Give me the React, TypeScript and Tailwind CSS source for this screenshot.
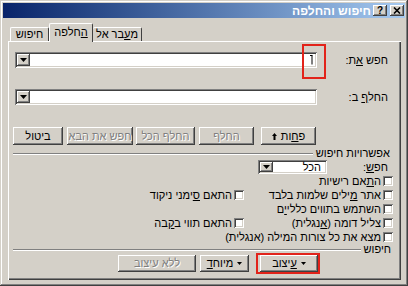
/*
 * Find & Replace dialog (Hebrew, classic Windows look)
 */

import type { ReactNode } from 'react';

const raised =
  'shadow-[inset_-1px_-1px_#404040,inset_1px_1px_#ffffff,inset_-2px_-2px_#808080]';
const sunken =
  'shadow-[inset_1px_1px_#808080,inset_-1px_-1px_#ffffff,inset_2px_2px_#404040,inset_-2px_-2px_#d4d0c8]';
const grayed = 'text-[#808080] [text-shadow:1px_1px_0_#ffffff]';

function DropArrow() {
  return (
    <div className={`w-[13px] h-full bg-[#d4d0c8] flex items-center justify-center shrink-0 ${raised}`}>
      <svg width="7" height="4" viewBox="0 0 7 4">
        <path d="M0 0h7L3.5 4z" fill="#000" />
      </svg>
    </div>
  );
}

function SmallArrow({ dim }: { dim?: boolean }) {
  return (
    <svg width="5" height="3" viewBox="0 0 5 3" className="shrink-0">
      <path d="M0 0h5L2.5 3z" fill={dim ? '#808080' : '#000'} />
    </svg>
  );
}

function Btn({
  w,
  mr,
  h = 'h-[18px]',
  disabled,
  children,
}: {
  w: string;
  mr?: string;
  h?: string;
  disabled?: boolean;
  children: ReactNode;
}) {
  return (
    <div
      className={`${w} ${h} ${mr ?? ''} shrink-0 flex items-center justify-center gap-[4px] bg-[#d4d0c8] ${raised} ${
        disabled ? grayed : 'text-black'
      }`}
    >
      {children}
    </div>
  );
}

function Check({ label, w }: { label: ReactNode; w?: string }) {
  return (
    <div className={`flex items-center gap-[2px] ${w ?? ''}`}>
      <div className={`w-[10px] h-[10px] bg-white shrink-0 ${sunken}`} />
      <span className="leading-none whitespace-nowrap">{label}</span>
    </div>
  );
}

function Separator({ label, pr }: { label: string; pr: string }) {
  return (
    <div className={`flex items-center h-[11px] ${pr}`}>
      <span className="leading-none whitespace-nowrap pl-[3px]">{label}</span>
      <div className="flex-1 ml-[5px] h-[2px] border-t border-t-[#808080] border-b border-b-white" />
    </div>
  );
}

export default function App() {
  return (
    <div
      className="w-[408px] h-[286px] bg-[#d4d0c8] overflow-hidden flex flex-col text-[11px] text-black shadow-[inset_-1px_-1px_#404040,inset_1px_1px_#d4d0c8,inset_-2px_-2px_#808080,inset_2px_2px_#ffffff]"
      style={{ fontFamily: '"Liberation Sans", "DejaVu Sans", sans-serif' }}
    >
      {/* Title bar */}
      <div
        dir="rtl"
        className="mt-[3px] mx-[3px] h-[15px] shrink-0 flex items-center bg-gradient-to-l from-[#a6caf0] to-[#0a246a] pr-[1px]"
      >
        <div className={`w-[14px] h-[11px] bg-[#d4d0c8] flex items-center justify-center ${raised}`}>
          <svg width="8" height="7" viewBox="0 0 8 7">
            <path d="M1 0.5l6 6M7 0.5l-6 6" stroke="#000" strokeWidth="1.6" />
          </svg>
        </div>
        <div
          className={`w-[14px] h-[11px] mr-[3px] bg-[#d4d0c8] flex items-center justify-center text-[10px] font-bold leading-none ${raised}`}
        >
          ?
        </div>
        <span className="mr-[2px] text-white font-bold text-[12px] leading-none">חיפוש והחלפה</span>
      </div>

      {/* Tabs */}
      <div className="h-[23px] shrink-0 flex items-end pl-[10px] relative z-10">
        <div className="w-[39px] h-[14px] flex items-center justify-center border-l border-t border-white border-r border-r-[#404040] rounded-t-[2px] leading-none">
          חיפוש
        </div>
        <div className="w-[44px] h-[19px] -mb-[1px] bg-[#d4d0c8] flex items-start pt-[3px] justify-center border-l border-t border-white border-r border-r-[#404040] rounded-t-[2px] leading-none">
          <span>
            <u>ה</u>חלפה
          </span>
        </div>
        <div className="w-[49px] h-[14px] flex items-center justify-center border-t border-white border-r border-r-[#404040] rounded-t-[2px] leading-none">
          <span>
            מ<u>ע</u>בר אל
          </span>
        </div>
      </div>

      {/* Panel */}
      <div
        dir="rtl"
        className="ml-[8px] w-[393px] h-[239px] shrink-0 flex flex-col shadow-[inset_1px_1px_#ffffff,inset_-1px_-1px_#404040,inset_-2px_-2px_#808080]"
      >
        {/* Find what */}
        <div className="mt-[11px] h-[16px] flex items-center relative">
          <div className="w-[84px] pr-[13px] leading-none">
            חפש <u>א</u>ת:
          </div>
          <div className={`w-[302px] h-[16px] bg-white flex items-stretch justify-between p-[2px] ${sunken}`}>
            <svg width="6" height="10" viewBox="0 0 6 10" className="mt-[1px] mr-[1px]">
              <path d="M2 0.5h2.5M4 0.5v9" stroke="#000" strokeWidth="1" />
            </svg>
            <DropArrow />
          </div>
          <div className="absolute right-[75px] -top-[8px] w-[24px] h-[35px] border-2 border-[#e2231a]" />
        </div>

        {/* Replace with */}
        <div className="mt-[21px] h-[16px] flex items-center">
          <div className="w-[84px] pr-[13px] leading-none">
            החל<u>ף</u> ב:
          </div>
          <div className={`w-[302px] h-[16px] bg-white flex items-stretch justify-end p-[2px] ${sunken}`}>
            <DropArrow />
          </div>
        </div>

        {/* Command buttons */}
        <div className="mt-[22px] h-[18px] flex items-center pr-[85px]">
          <Btn w="w-[55px]">
            <span>
              פ<u>ח</u>ות
            </span>
            <svg width="5" height="7" viewBox="0 0 5 7">
              <path d="M2.5 0L5 3H0z M1.5 3h2v4h-2z" fill="#000" />
            </svg>
          </Btn>
          <Btn w="w-[55px]" mr="mr-[7px]" disabled>
            החלף
          </Btn>
          <Btn w="w-[59px]" mr="mr-[4px]" disabled>
            החלף הכל
          </Btn>
          <Btn w="w-[66px]" mr="mr-[3px]" disabled>
            חפש את הבא
          </Btn>
          <Btn w="w-[50px]" mr="mr-[4px]">
            ביטול
          </Btn>
        </div>

        <div className="mt-[3px]">
          <Separator label="אפשרויות חיפוש" pr="pr-[11px]" />
        </div>

        {/* Search direction */}
        <div className="mt-[1px] h-[14px] flex items-center">
          <div className="w-[74px] pr-[13px] leading-none">
            חפ<u>ש</u>:
          </div>
          <div className={`w-[69px] h-[14px] bg-white flex items-stretch justify-between p-[2px] ${sunken}`}>
            <span className="pr-[4px] leading-[10px]">הכל</span>
            <DropArrow />
          </div>
        </div>

        {/* Options */}
        <div className="flex flex-col pr-[8px]">
          <div className="h-[14px] flex items-center">
            <Check label={<>ה<u>ת</u>אם רישיות</>} />
          </div>
          <div className="h-[14px] flex items-center">
            <Check w="w-[149px]" label={<>אתר <u>מ</u>ילים שלמות בלבד</>} />
            <Check label={<>התאם <u>ס</u>ימני ניקוד</>} />
          </div>
          <div className="h-[14px] flex items-center">
            <Check label={<>השתמש בתווים כללי<u>י</u>ם</>} />
          </div>
          <div className="h-[14px] flex items-center">
            <Check w="w-[149px]" label={<>צליל דומה (<u>א</u>נגלית)</>} />
            <Check label={<>התאם תווי ב<u>ק</u>בה</>} />
          </div>
          <div className="h-[14px] flex items-center">
            <Check label="מצא את כל צורות המילה (אנגלית)" />
          </div>
        </div>

        <Separator label="חיפוש" pr="pr-[10px]" />

        {/* Format buttons */}
        <div className="h-[17px] flex items-center pr-[83px]">
          <div className="relative">
            <Btn w="w-[58px]" h="h-[17px]">
              <SmallArrow />
              <span>
                <u>ע</u>יצוב
              </span>
            </Btn>
            <div className="absolute -right-[2px] -left-[4px] -top-[2px] -bottom-[2px] border-2 border-[#e2231a]" />
          </div>
          <Btn w="w-[49px]" h="h-[17px]" mr="mr-[11px]">
            <SmallArrow />
            <span>
              מיוח<u>ד</u>
            </span>
          </Btn>
          <Btn w="w-[78px]" h="h-[17px]" mr="mr-[4px]" disabled>
            ללא עיצוב
          </Btn>
        </div>
      </div>
    </div>
  );
}
